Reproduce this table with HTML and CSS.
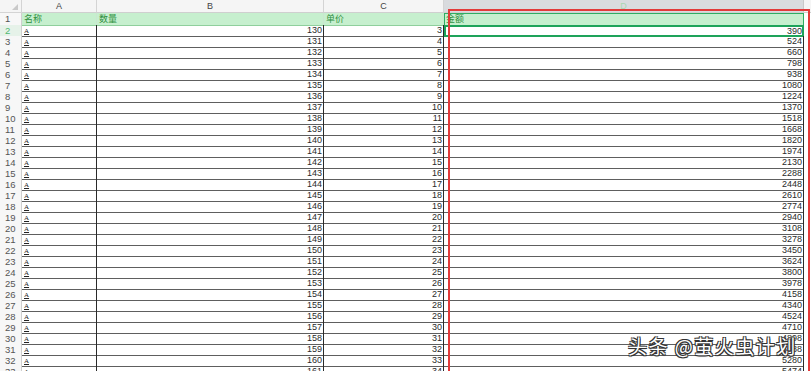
FILE: index.html
```html
<!DOCTYPE html>
<html>
<head>
<meta charset="utf-8">
<link rel="stylesheet" href="styles.css">
</head>
<body>
<div class="sheet">
  <div class="row colhead">
    <div class="corner"><span class="tri"></span></div>
    <div class="ch">A</div>
    <div class="ch">B</div>
    <div class="ch">C</div>
    <div class="ch chsel">D</div>
    <div class="ch chend"></div>
  </div>
  <div class="row hdr">
    <div class="rh">1</div>
    <div class="c t">名称</div>
    <div class="c t">数量</div>
    <div class="c t">单价</div>
    <div class="c t d1">金额</div>
    <div class="c end"></div>
  </div>
  <div class="row"><div class="rh rhsel">2</div><div class="c n">A</div><div class="c r">130</div><div class="c r">3</div><div class="c r d2">390</div><div class="c end"></div></div>
  <div class="row"><div class="rh">3</div><div class="c n">A</div><div class="c r">131</div><div class="c r">4</div><div class="c r">524</div><div class="c end"></div></div>
  <div class="row"><div class="rh">4</div><div class="c n">A</div><div class="c r">132</div><div class="c r">5</div><div class="c r">660</div><div class="c end"></div></div>
  <div class="row"><div class="rh">5</div><div class="c n">A</div><div class="c r">133</div><div class="c r">6</div><div class="c r">798</div><div class="c end"></div></div>
  <div class="row"><div class="rh">6</div><div class="c n">A</div><div class="c r">134</div><div class="c r">7</div><div class="c r">938</div><div class="c end"></div></div>
  <div class="row"><div class="rh">7</div><div class="c n">A</div><div class="c r">135</div><div class="c r">8</div><div class="c r">1080</div><div class="c end"></div></div>
  <div class="row"><div class="rh">8</div><div class="c n">A</div><div class="c r">136</div><div class="c r">9</div><div class="c r">1224</div><div class="c end"></div></div>
  <div class="row"><div class="rh">9</div><div class="c n">A</div><div class="c r">137</div><div class="c r">10</div><div class="c r">1370</div><div class="c end"></div></div>
  <div class="row"><div class="rh">10</div><div class="c n">A</div><div class="c r">138</div><div class="c r">11</div><div class="c r">1518</div><div class="c end"></div></div>
  <div class="row"><div class="rh">11</div><div class="c n">A</div><div class="c r">139</div><div class="c r">12</div><div class="c r">1668</div><div class="c end"></div></div>
  <div class="row"><div class="rh">12</div><div class="c n">A</div><div class="c r">140</div><div class="c r">13</div><div class="c r">1820</div><div class="c end"></div></div>
  <div class="row"><div class="rh">13</div><div class="c n">A</div><div class="c r">141</div><div class="c r">14</div><div class="c r">1974</div><div class="c end"></div></div>
  <div class="row"><div class="rh">14</div><div class="c n">A</div><div class="c r">142</div><div class="c r">15</div><div class="c r">2130</div><div class="c end"></div></div>
  <div class="row"><div class="rh">15</div><div class="c n">A</div><div class="c r">143</div><div class="c r">16</div><div class="c r">2288</div><div class="c end"></div></div>
  <div class="row"><div class="rh">16</div><div class="c n">A</div><div class="c r">144</div><div class="c r">17</div><div class="c r">2448</div><div class="c end"></div></div>
  <div class="row"><div class="rh">17</div><div class="c n">A</div><div class="c r">145</div><div class="c r">18</div><div class="c r">2610</div><div class="c end"></div></div>
  <div class="row"><div class="rh">18</div><div class="c n">A</div><div class="c r">146</div><div class="c r">19</div><div class="c r">2774</div><div class="c end"></div></div>
  <div class="row"><div class="rh">19</div><div class="c n">A</div><div class="c r">147</div><div class="c r">20</div><div class="c r">2940</div><div class="c end"></div></div>
  <div class="row"><div class="rh">20</div><div class="c n">A</div><div class="c r">148</div><div class="c r">21</div><div class="c r">3108</div><div class="c end"></div></div>
  <div class="row"><div class="rh">21</div><div class="c n">A</div><div class="c r">149</div><div class="c r">22</div><div class="c r">3278</div><div class="c end"></div></div>
  <div class="row"><div class="rh">22</div><div class="c n">A</div><div class="c r">150</div><div class="c r">23</div><div class="c r">3450</div><div class="c end"></div></div>
  <div class="row"><div class="rh">23</div><div class="c n">A</div><div class="c r">151</div><div class="c r">24</div><div class="c r">3624</div><div class="c end"></div></div>
  <div class="row"><div class="rh">24</div><div class="c n">A</div><div class="c r">152</div><div class="c r">25</div><div class="c r">3800</div><div class="c end"></div></div>
  <div class="row"><div class="rh">25</div><div class="c n">A</div><div class="c r">153</div><div class="c r">26</div><div class="c r">3978</div><div class="c end"></div></div>
  <div class="row"><div class="rh">26</div><div class="c n">A</div><div class="c r">154</div><div class="c r">27</div><div class="c r">4158</div><div class="c end"></div></div>
  <div class="row"><div class="rh">27</div><div class="c n">A</div><div class="c r">155</div><div class="c r">28</div><div class="c r">4340</div><div class="c end"></div></div>
  <div class="row"><div class="rh">28</div><div class="c n">A</div><div class="c r">156</div><div class="c r">29</div><div class="c r">4524</div><div class="c end"></div></div>
  <div class="row"><div class="rh">29</div><div class="c n">A</div><div class="c r">157</div><div class="c r">30</div><div class="c r">4710</div><div class="c end"></div></div>
  <div class="row"><div class="rh">30</div><div class="c n">A</div><div class="c r">158</div><div class="c r">31</div><div class="c r">4898</div><div class="c end"></div></div>
  <div class="row"><div class="rh">31</div><div class="c n">A</div><div class="c r">159</div><div class="c r">32</div><div class="c r">5088</div><div class="c end"></div></div>
  <div class="row"><div class="rh">32</div><div class="c n">A</div><div class="c r">160</div><div class="c r">33</div><div class="c r">5280</div><div class="c end"></div></div>
  <div class="row"><div class="rh">33</div><div class="c n">A</div><div class="c r">161</div><div class="c r">34</div><div class="c r">5474</div><div class="c end"></div></div>
  <div class="redbox"></div>
  <div class="mark">头条 @萤火虫计划</div>
</div>
</body>
</html>
```
FILE: styles.css
```css
* { box-sizing: border-box; }
html, body { margin: 0; padding: 0; background: #fff; overflow: hidden; }
body { width: 811px; height: 371px; }

.sheet {
  position: relative;
  display: flex;
  flex-direction: column;
  width: 811px;
  height: 371px;
  overflow: hidden;
  font-family: "Liberation Sans", "Noto Sans CJK SC", sans-serif;
  font-size: 9px;
  color: #333;
}

.row {
  display: grid;
  grid-template-columns: 22px 75px 227px 120px 360px 7px;
  height: 11px;
  flex: none;
}

.colhead { height: 13px; background: #f5f5f5; }
.hdr { height: 12px; }

.corner {
  position: relative;
  border-right: 1px solid #d4d4d4;
  border-bottom: 1px solid #d4d4d4;
}
.tri {
  position: absolute;
  right: 3px;
  bottom: 2px;
  width: 0;
  height: 0;
  border-left: 6px solid transparent;
  border-bottom: 6px solid #c9c9c9;
}

.ch {
  border-right: 1px solid #d4d4d4;
  border-bottom: 1px solid #cfcfcf;
  text-align: center;
  line-height: 12px;
  color: #444;
  font-size: 9px;
}
.chsel { background: #d9dbde; color: #a8d7b1; border-right-color: #c9c9c9; }
.chend { background: #f5f5f5; border-right: none; }

.rh {
  background: #f7f7f7;
  border-right: 1px solid #cfcfcf;
  border-bottom: 1px solid #e0e0e0;
  color: #555;
  line-height: 11px;
  font-size: 9.5px;
  text-align: left;
  padding-left: 5px;
}
.rhsel { color: #4fb870; background: #e6f2e9; }

.c {
  border-right: 1px solid #2a2a2a;
  border-bottom: 1px solid #5e5e5e;
  line-height: 11px;
  white-space: nowrap;
  overflow: hidden;
}

.hdr .c { background: #c6efce; border-right-color: #c9e7cf; border-bottom-color: #8fcf9c; }
.hdr .rh { line-height: 12px; }
.t {
  color: #2f8f40;
  font-family: "Noto Sans CJK SC", sans-serif;
  font-size: 9px;
  line-height: 12px;
  padding-left: 2px;
}
.hdr .d1 { border: 1px solid #2fae63; padding-left: 1px; line-height: 10px; }

.n {
  font-family: "Liberation Serif", serif;
  font-size: 7px;
  padding-left: 2px;
  line-height: 12px;
  text-decoration: underline;
  text-decoration-thickness: 1px;
  color: #222;
}
.r {
  text-align: right;
  padding-right: 1px;
  font-family: "Liberation Sans", sans-serif;
  font-size: 9px;
  color: #2a2a2a;
  line-height: 11px;
}
.d2 { border: 2px solid #1ea35a; line-height: 8px; padding-right: 0; }

.end { border-right: none; border-bottom: 1px solid #bdbdbd; background: #fff; }
.hdr .end { background: #fff; border-right: none; border-bottom-color: #ddd; }

.redbox {
  position: absolute;
  left: 448px;
  top: 9px;
  width: 362px;
  height: 380px;
  border: 2px solid #e23a3a;
  pointer-events: none;
}

.mark {
  position: absolute;
  left: 628px;
  top: 334px;
  font-family: "Noto Sans CJK SC", sans-serif;
  font-size: 19px;
  line-height: 24px;
  color: #fff;
  letter-spacing: 1.5px;
  text-shadow: 1px 1px 0 #333, -1px -1px 0 #333, 1px -1px 0 #333, -1px 1px 0 #333, 0 1px 1px #222;
}
```
